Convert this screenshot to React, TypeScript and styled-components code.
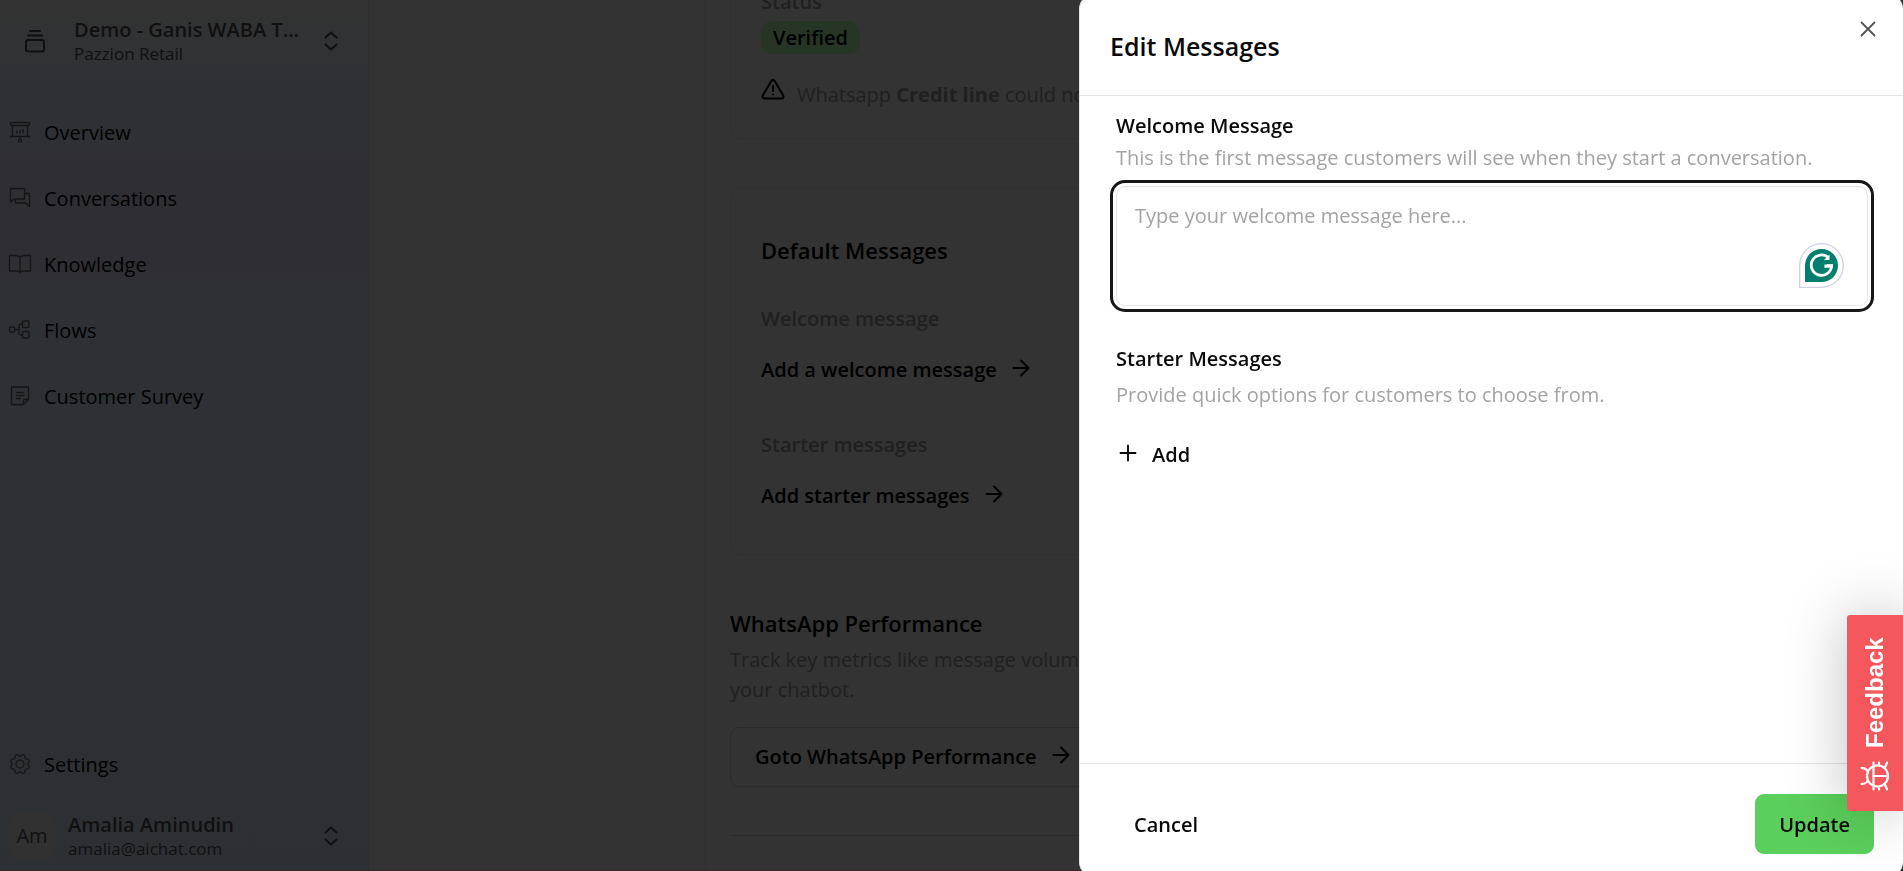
import React from 'react';
import styled, { createGlobalStyle } from 'styled-components';

const Global = createGlobalStyle`
  * { box-sizing: border-box; }
  html, body, #root { height: 100%; }
  body {
    margin: 0;
    overflow: hidden;
    font-family: 'Open Sans', 'Noto Sans', sans-serif;
    font-size: 20px;
    line-height: 30px;
    color: #000;
    background: #333;
  }
  button, textarea { font: inherit; color: inherit; }
  button { background: none; border: 0; padding: 0; cursor: pointer; }
  h2, h3, p { margin: 0; }
  a { color: inherit; text-decoration: none; }
  svg { flex: none; }
`;

const Page = styled.div`
  display: flex;
  height: 100%;
  overflow: hidden;
  border-bottom: 1px solid #35282c;
`;

const Sidebar = styled.aside`
  flex: none;
  width: 369px;
  display: flex;
  flex-direction: column;
  padding: 17px 0 10px;
  background: linear-gradient(180deg, #323232 0, #303234 60px, #2f3034 90px, #2f3034 150px, #2f2e32 175px, #2f2e32 260px, #2f3034 285px, #2e3134 340px, #2d3133 420px, #2d3033 100%);
  border-right: 1px solid #2e2e2e;
`;

const Switcher = styled.button<{ $inset: number; $gap: number }>`
  display: flex;
  align-items: center;
  gap: ${(p) => p.$gap}px;
  padding: 0 25px 0 ${(p) => p.$inset}px;
  color: #101010;
  text-align: left;
`;

const SwitcherText = styled.span`
  flex: 1;
  min-width: 0;
  display: flex;
  flex-direction: column;
`;

const SwitcherName = styled.span`
  font-weight: 600;
  line-height: 26px;
  white-space: nowrap;
`;

const SwitcherDetail = styled.span`
  font-size: 17px;
  line-height: 22px;
`;

const Nav = styled.nav`
  flex: 1;
  display: flex;
  flex-direction: column;
  gap: 36px;
  padding: 53px 0 32px 8px;
`;

const NavItem = styled.a<{ $last?: boolean }>`
  display: flex;
  align-items: center;
  gap: 12px;
  margin-top: ${(p) => (p.$last ? 'auto' : 0)};
  svg { margin-bottom: 2px; color: #151515; }
`;

const Avatar = styled.span`
  width: 48px;
  height: 48px;
  border-radius: 12px;
  background: #313131;
  display: grid;
  place-items: center;
`;

const Main = styled.main`
  flex: 1;
  margin-left: 336px;
  border-left: 1px solid #2e2e2e;
  padding: 0 24px;
  display: flex;
  flex-direction: column;
`;

const Card = styled.section<{ $first?: boolean }>`
  flex: none;
  border: 1px solid #303030;
  border-radius: 12px;
  padding: ${(p) => (p.$first ? '0 30px 24px' : '46px 30px 43px')};
  margin-top: ${(p) => (p.$first ? '-14px' : '48px')};
  display: flex;
  flex-direction: column;
  align-items: flex-start;
`;

const Muted = styled.p<{ $medium?: boolean }>`
  color: #202020;
  font-weight: ${(p) => (p.$medium ? 600 : 400)};
`;

const Badge = styled.span`
  margin-top: 4px;
  padding: 2px 12px;
  border-radius: 12px;
  line-height: 29px;
  font-weight: 600;
  background: #273527;
`;

const Notice = styled.div`
  display: flex;
  gap: 12px;
  margin-top: 23px;
  padding-bottom: 4px;
  white-space: nowrap;
  p { padding-top: 3px; }
`;

const Heading = styled.h2`
  font-size: 22px;
  font-weight: 600;
  line-height: 32px;
`;

const Group = styled.div`
  display: flex;
  flex-direction: column;
  align-items: flex-start;
  gap: 21px;
  margin-top: 38px;
  & + & { margin-top: 45px; }
`;

const ArrowButton = styled.button<{ $boxed?: boolean }>`
  display: flex;
  align-items: center;
  gap: 12px;
  font-weight: 600;
  svg { margin-bottom: 4px; }
  ${(p) => p.$boxed && `
    width: 100%;
    height: 60px;
    border: 1px solid #2b2b2b;
    border-radius: 9px;
    padding: 0 24px;
    margin-top: 22px;
  `}
`;

const Performance = styled.section`
  margin-top: 52px;
  padding-bottom: 48px;
  border-bottom: 1px solid #2b2b2b;
  h2 { margin-bottom: 6px; }
`;

const Drawer = styled.div`
  position: fixed;
  top: -6px;
  bottom: -6px;
  right: 0;
  width: 43.3%;
  background: #fff;
  border: 1px solid #e5e5e5;
  border-right: 0;
  border-radius: 15px;
  display: flex;
  flex-direction: column;
  color: #0a0a0a;
`;

const DrawerHead = styled.header`
  display: flex;
  align-items: flex-start;
  justify-content: space-between;
  padding: 22px 23px 31px 30px;
  border-bottom: 1px solid #e5e5e5;
`;

const DrawerTitle = styled.h2`
  padding-top: 11px;
  font-size: 25px;
  font-weight: 600;
  line-height: 36px;
`;

const CloseButton = styled.button`
  display: flex;
  color: #555;
`;

const DrawerBody = styled.div`
  flex: 1;
  padding: 14px 35px 14px 36px;
`;

const FieldLabel = styled.label`
  display: block;
  font-weight: 600;
  line-height: 32px;
`;

const FieldTitle = styled.h3`
  font-size: 20px;
  font-weight: 600;
  line-height: 32px;
  margin-top: 37px;
`;

const Help = styled.p<{ $spaced?: boolean }>`
  color: #a3a3a3;
  line-height: 32px;
  margin-top: ${(p) => (p.$spaced ? 4 : 0)}px;
`;

const MessageBox = styled.div`
  position: relative;
  display: flex;
  margin-top: 12px;
`;

const MessageInput = styled.textarea`
  width: 100%;
  height: 120px;
  resize: none;
  padding: 14px 18px;
  border: 1px solid #e5e5e5;
  border-radius: 9px;
  outline: 3px solid #171717;
  outline-offset: 3px;
  &::placeholder { color: #a3a3a3; }
`;

const WritingAid = styled.button`
  position: absolute;
  right: 24px;
  bottom: 18px;
  display: flex;
`;

const AddButton = styled.button`
  display: flex;
  align-items: center;
  gap: 12px;
  margin-top: 29px;
  font-weight: 600;
  svg { margin-bottom: 4px; }
`;

const DrawerFoot = styled.footer`
  display: flex;
  justify-content: space-between;
  padding: 30px 29px 22px 30px;
  border-top: 1px solid #e5e5e5;
`;

const ActionButton = styled.button<{ $primary?: boolean }>`
  height: 60px;
  padding: 2px 24px 0;
  border-radius: 9px;
  font-weight: 600;
  background: ${(p) => (p.$primary ? '#5bcf5b' : 'transparent')};
`;

const FeedbackTab = styled.button`
  position: fixed;
  right: 0;
  bottom: 60px;
  width: 56px;
  height: 196px;
  border-radius: 0 3px 3px 0;
  background: #f4585d;
  color: #fff;
  box-shadow: 0 0 60px rgba(0, 0, 0, 0.25);
  writing-mode: vertical-rl;
  transform: rotate(180deg);
  display: flex;
  align-items: center;
  gap: 13px;
  padding: 20px 0;
  font-family: 'Liberation Sans', Arial, sans-serif;
  font-weight: 700;
  font-size: 24px;
`;

type GlyphProps = { width?: number; children: React.ReactNode };

const Glyph = ({ width = 1.3, children }: GlyphProps) => (
  <svg
    width={24}
    height={24}
    viewBox="0 0 24 24"
    fill="none"
    stroke="currentColor"
    strokeWidth={width}
    strokeLinecap="round"
    strokeLinejoin="round"
    aria-hidden="true"
  >
    {children}
  </svg>
);

const Arrow = () => <Glyph width={2}><path d="M4.500 12H19.500M12 4.500l7.500 7.500L12 19.500" /></Glyph>;

const UpDown = () => <Glyph width={2}><path d="M6.500 8.500 12 3.500l5.500 5M6.500 15.500l5.500 5 5.500-5" /></Glyph>;

const Stack = () => (
  <Glyph width={2}>
    <path d="M7 2h10M5 6.500h14" />
    <rect x="3" y="11" width="18" height="11.500" rx="2" />
  </Glyph>
);

const Warning = () => (
  <Glyph width={2}>
    <path d="M10.300 4 1.800 18.500A2 2 0 0 0 3.500 21.500h17a2 2 0 0 0 1.700-3L13.700 4a2 2 0 0 0-3.400 0zM12 9v5M12 17.500v.1" />
  </Glyph>
);

// Eight rounded teeth traced round a circle.
const gearPath = Array.from({ length: 160 }, (_, i) => {
  const angle = (i / 160) * Math.PI * 2;
  const radius = 8.9 + 0.9 * Math.tanh(-2.2 * Math.cos(8 * angle));
  const x = 12 + radius * Math.cos(angle);
  const y = 12 + radius * Math.sin(angle);
  return `${i ? 'L' : 'M'}${x.toFixed(2)} ${y.toFixed(2)}`;
}).join('') + 'z';

const Bug = () => (
  <svg width={30} height={30} viewBox="0 0 30 30" fill="none" stroke="currentColor" strokeWidth={2.2} strokeLinecap="round" aria-hidden="true">
    <circle cx="12.500" cy="15" r="10.500" />
    <path d="M16.500 5.500v19M16.500 15H2M16.500 5V1.500M11 4.500V1.500M5 6.500 3 1.500M16.500 25v3.500M11 25.500v3M5 23.500l-2 5M22 11c1-2.500 3-4 6.500-4M22 19c1 2.500 3 4 6.500 4" />
  </svg>
);

const WritingMark = () => (
  <svg width={45} height={45} viewBox="0 0 45 45" fill="none" aria-hidden="true">
    <path d="M.7 44.300V22.500A21.800 21.800 0 1 1 22.500 44.300z" fill="#fff" stroke="#ced2e2" strokeWidth="1.300" />
    <path d="M6 39V22.500A16.500 16.500 0 1 1 22.500 39z" fill="#027e6f" />
    <path d="M29.500 14.800A10.200 10.200 0 1 0 32.600 23H25.500" stroke="#fff" strokeWidth="2.800" />
    <path d="M30.500 11.500v5.500h-5.500zM25 24.500l3.500-3.200h5.500v3.200z" fill="#fff" />
  </svg>
);

const navItems = [
  {
    label: 'Overview',
    icon: (
      <>
        <rect x="2.500" y="2.500" width="19" height="3" rx=".5" />
        <path d="M4.500 5.500v11M19.500 5.500v11M2.500 16.500h19M12 16.500v2.500M9 13v-2M12 13v-2.500M15 13v-3.500" />
        <circle cx="12" cy="20.700" r="1.500" />
      </>
    ),
  },
  { label: 'Conversations', icon: <path d="M2.500 2.500h14v10.500H6l-3.500 3zM16.500 7.500h5v13l-4-3.500H7.500v-4" /> },
  { label: 'Knowledge', icon: <path d="M12 5.500C11 4 9 3.500 7 3.500H1.500v15.500H8c2 0 3.500.5 4 1.500.5-1 2-1.500 4-1.500h6.500V3.500H17c-2 0-4 .5-5 2zM12 5.500v15" /> },
  {
    label: 'Flows',
    icon: (
      <>
        <rect x="1.500" y="9" width="5" height="5" rx="1" />
        <rect x="14.500" y="3" width="6.500" height="6.500" rx="1" />
        <rect x="14.500" y="13.500" width="6.500" height="6.500" rx="1" />
        <path d="M6.500 11.500H11M14.500 6H13q-2 0-2 2v7q0 2 2 2h1.500" />
      </>
    ),
  },
  {
    label: 'Customer Survey',
    icon: <path d="M4.500 3h15q1 0 1 1v11.500l-5 5h-11q-1 0-1-1V4q0-1 1-1zM20.500 15.500h-4q-1 0-1 1v4M8.500 8.500h7.500M8.500 11.500h7.500M8.500 14.500h4" />,
  },
];

export default function App() {
  return (
    <>
      <Global />
      <Page>
        <Sidebar>
          <Switcher $inset={23} $gap={27}>
            <Stack />
            <SwitcherText>
              <SwitcherName>Demo - Ganis WABA T...</SwitcherName>
              <SwitcherDetail>Pazzion Retail</SwitcherDetail>
            </SwitcherText>
            <UpDown />
          </Switcher>
          <Nav>
            {navItems.map((item) => (
              <NavItem key={item.label} href="#">
                <Glyph>{item.icon}</Glyph>
                {item.label}
              </NavItem>
            ))}
            <NavItem href="#" $last>
              <Glyph>
                <circle cx="12" cy="12" r="4" />
                <path d={gearPath} />
              </Glyph>
              Settings
            </NavItem>
          </Nav>
          <Switcher $inset={8} $gap={12}>
            <Avatar>Am</Avatar>
            <SwitcherText>
              <SwitcherName>Amalia Aminudin</SwitcherName>
              <SwitcherDetail>amalia@aichat.com</SwitcherDetail>
            </SwitcherText>
            <UpDown />
          </Switcher>
        </Sidebar>
        <Main>
          <Card $first>
            <Muted $medium>Status</Muted>
            <Badge>Verified</Badge>
            <Notice>
              <Warning />
              <Muted>Whatsapp <b>Credit line</b> could not</Muted>
            </Notice>
          </Card>
          <Card>
            <Heading>Default Messages</Heading>
            <Group>
              <Muted $medium>Welcome message</Muted>
              <ArrowButton>Add a welcome message<Arrow /></ArrowButton>
            </Group>
            <Group>
              <Muted $medium>Starter messages</Muted>
              <ArrowButton>Add starter messages<Arrow /></ArrowButton>
            </Group>
          </Card>
          <Performance>
            <Heading>WhatsApp Performance</Heading>
            <Muted>Track key metrics like message volume<br />your chatbot.</Muted>
            <ArrowButton $boxed>Goto WhatsApp Performance<Arrow /></ArrowButton>
          </Performance>
        </Main>
      </Page>
      <Drawer role="dialog" aria-labelledby="drawer-title">
        <DrawerHead>
          <DrawerTitle id="drawer-title">Edit Messages</DrawerTitle>
          <CloseButton aria-label="Close">
            <Glyph width={1.8}><path d="M5.500 5.500l13 13M18.500 5.500l-13 13" /></Glyph>
          </CloseButton>
        </DrawerHead>
        <DrawerBody>
          <FieldLabel htmlFor="welcome">Welcome Message</FieldLabel>
          <Help>This is the first message customers will see when they start a conversation.</Help>
          <MessageBox>
            <MessageInput id="welcome" placeholder="Type your welcome message here..." />
            <WritingAid aria-label="Writing assistant"><WritingMark /></WritingAid>
          </MessageBox>
          <FieldTitle>Starter Messages</FieldTitle>
          <Help $spaced>Provide quick options for customers to choose from.</Help>
          <AddButton>
            <Glyph width={1.9}><path d="M4.500 12h15M12 4.500v15" /></Glyph>
            Add
          </AddButton>
        </DrawerBody>
        <DrawerFoot>
          <ActionButton>Cancel</ActionButton>
          <ActionButton $primary>Update</ActionButton>
        </DrawerFoot>
      </Drawer>
      <FeedbackTab><Bug />Feedback</FeedbackTab>
    </>
  );
}
